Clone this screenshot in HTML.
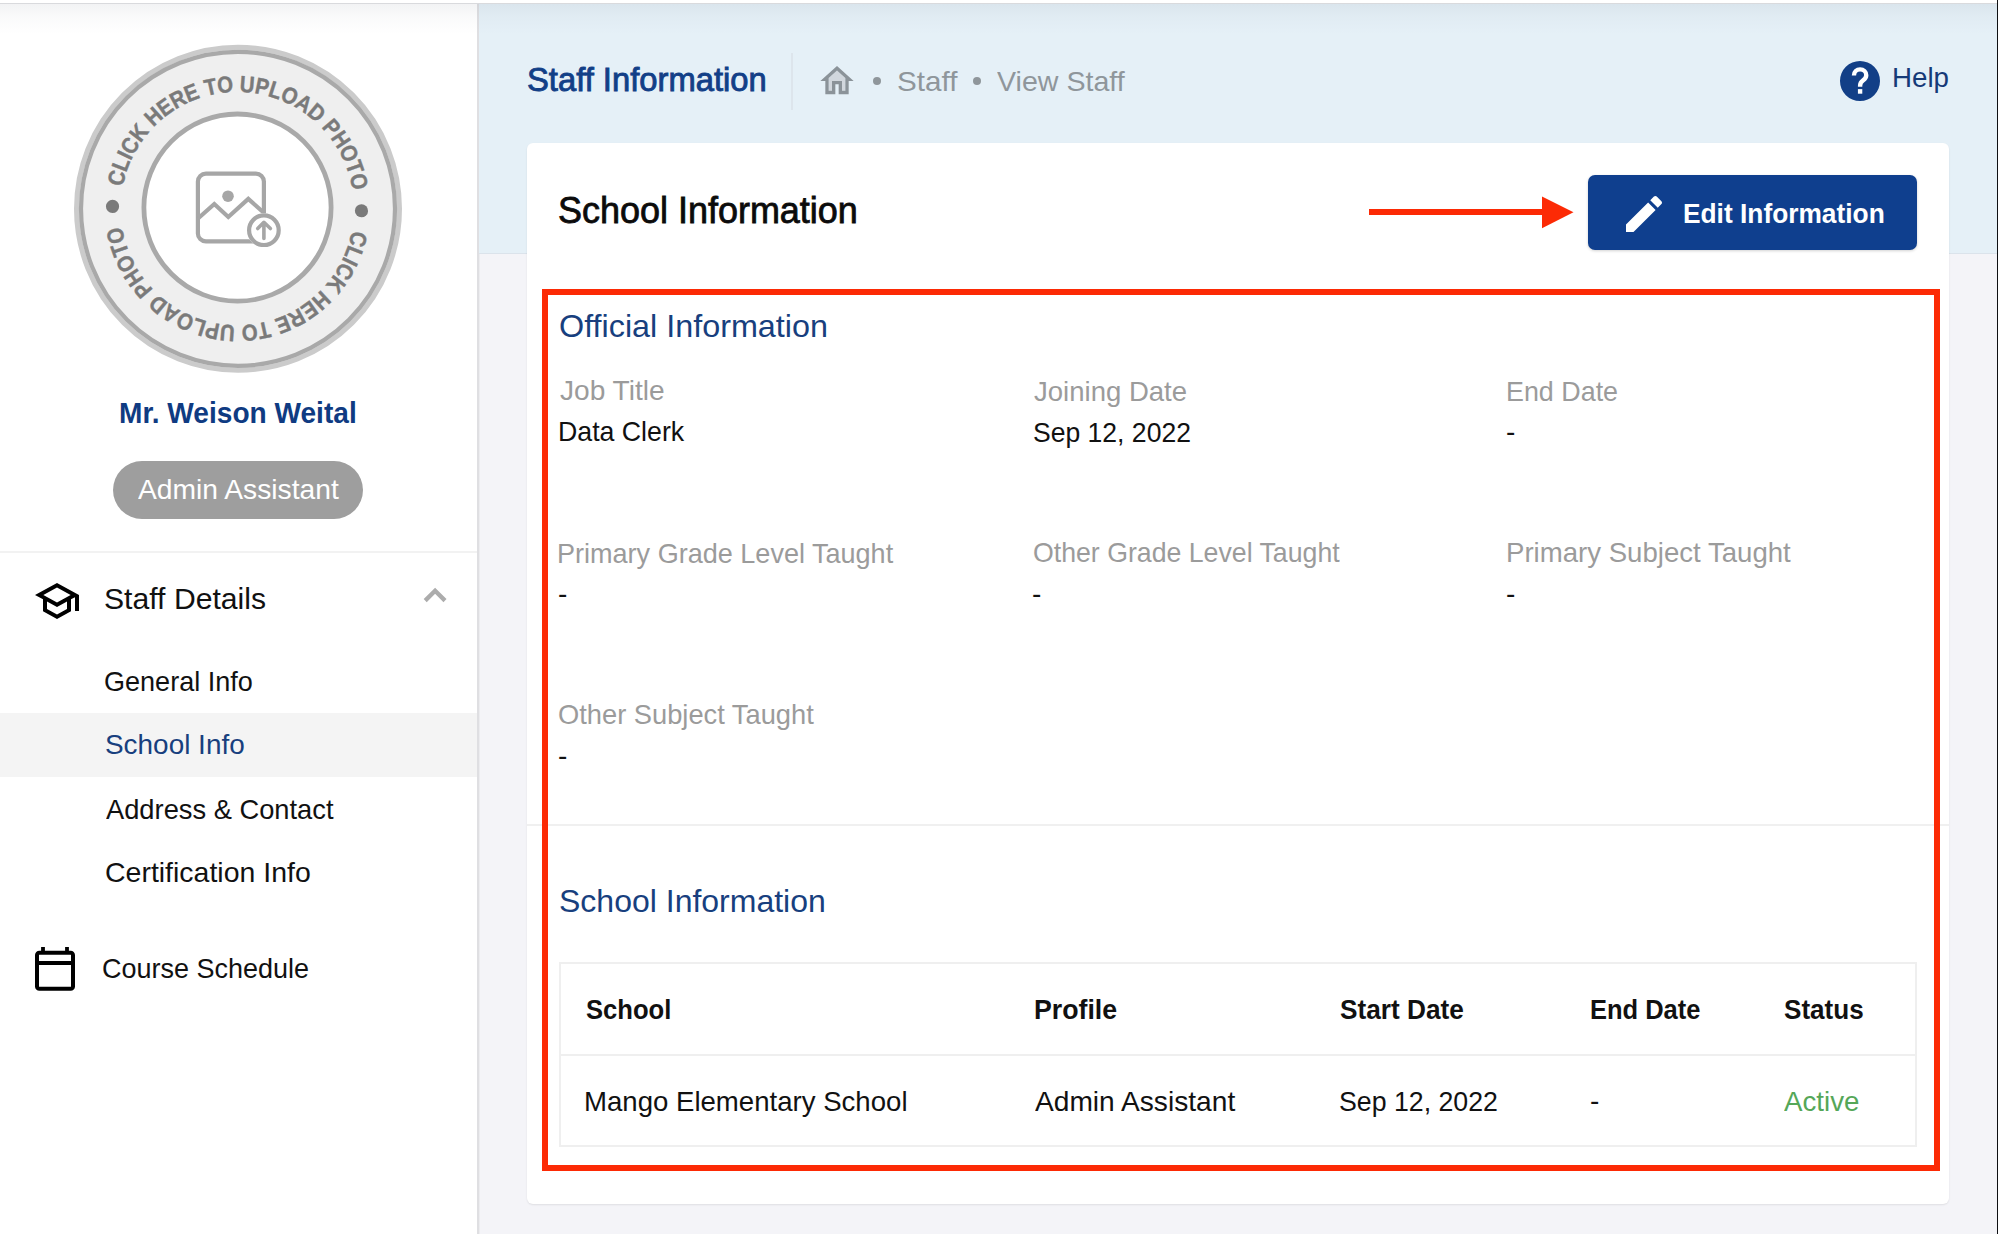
<!DOCTYPE html>
<html><head><meta charset="utf-8">
<style>
*{margin:0;padding:0;box-sizing:border-box}
html,body{width:1998px;height:1234px;overflow:hidden;background:#f4f4f8;font-family:"Liberation Sans",sans-serif}
.a{position:absolute}
.t{position:absolute;white-space:nowrap;line-height:1;transform-origin:0 0}
#side{left:0;top:0;width:477px;height:1234px;background:#fff}
#sideborder{left:477px;top:0;width:3px;height:1234px;background:linear-gradient(90deg,#dfdfe2 0,#dfdfe2 60%,#ececef 60%)}
#hero{left:479px;top:0;width:1519px;height:254px;background:#e5f0f7;border-bottom:1px solid #dbe3eb}
#topbar{left:0;top:0;width:1998px;height:3px;background:#fff}
#topline{left:0;top:3px;width:1998px;height:1px;background:#d9dadd}
#topshadow{left:0;top:4px;width:1998px;height:30px;background:linear-gradient(rgba(80,90,110,.075),rgba(80,90,110,.03) 40%,rgba(80,90,110,0))}
#rightedge{left:1997px;top:0;width:1px;height:1234px;background:#0e0f12}
#card{left:527px;top:143px;width:1422px;height:1061px;background:#fff;border-radius:6px;box-shadow:0 1px 2px rgba(0,0,0,.09)}
#redbox{left:542px;top:289px;width:1398px;height:882px;border:6px solid #fc2a05}
.lbl{font-size:28px;color:#9b9b9b}
.val{font-size:28px;color:#111}
.sub{font-size:32px;color:#183f7e}
.menu{font-size:28px;color:#111}
</style></head><body>
<div class="a" id="side"></div>
<div class="a" id="sideborder"></div>
<div class="a" id="hero"></div>
<div class="a" id="topbar"></div>
<div class="a" id="topline"></div>
<div class="a" id="topshadow"></div>
<div class="a" id="rightedge"></div>

<!-- header -->
<div class="t" id="h_title" style="left:526.8px;top:63.0px;font-size:33px;color:#123f87;-webkit-text-stroke:.9px #123f87;transform:scaleX(0.9924)">Staff Information</div>
<div class="a" style="left:791px;top:53px;width:2px;height:57px;background:#dde5ec"></div>
<svg class="a" style="left:816.6px;top:61px" width="40" height="39.8" viewBox="0 0 24 24" preserveAspectRatio="none"><path d="M7 10.19V18h2v-6h6v6h2v-7.81l-5-4.5z" fill="#d1d7dd"/><path d="M12 3L2 12h3v8h6v-6h2v6h6v-8h3L12 3zm5 15h-2v-6H9v6H7v-7.81l5-4.5 5 4.5V18z" fill="#8b9399"/></svg>
<div class="a" style="left:873px;top:77px;width:8px;height:8px;border-radius:50%;background:#8f969b"></div>
<div class="t" id="h_staff" style="left:896.7px;top:67.8px;font-size:28px;color:#8f969b;transform:scaleX(1.0574)">Staff</div>
<div class="a" style="left:973px;top:77px;width:8px;height:8px;border-radius:50%;background:#8f969b"></div>
<div class="t" id="h_view" style="left:997.4px;top:67.8px;font-size:28px;color:#8f969b;transform:scaleX(1.0208)">View Staff</div>
<svg class="a" style="left:1835px;top:56px" width="50" height="50" viewBox="0 0 24 24"><path fill="#123f87" d="M12 2.4a9.6 9.6 0 1 0 0 19.2 9.6 9.6 0 0 0 0-19.2z"/><path fill="none" stroke="#fff" stroke-width="2.1" d="M9.1 9.3c0-1.7 1.3-2.9 2.95-2.9s2.95 1.2 2.95 2.8c0 1.3-.7 1.9-1.6 2.6-.8.6-1.35 1.2-1.35 2.5v.5"/><path fill="#fff" d="M11 15.9h2.1v2.2H11z"/></svg>
<div class="t" id="h_help" style="left:1892.4px;top:64.4px;font-size:28px;color:#163a78;transform:scaleX(0.9894)">Help</div>

<div class="a" id="card"></div>
<div class="t" id="c_title" style="left:558.4px;top:192.6px;font-size:36px;color:#0b0b0b;-webkit-text-stroke:.8px #0b0b0b;transform:scaleX(0.9988)">School Information</div>

<!-- button -->
<div class="a" id="btn" style="left:1588px;top:175px;width:329px;height:75px;background:#0f3f8e;border-radius:7px;box-shadow:0 1px 3px rgba(0,0,0,.18)"></div>
<svg class="a" style="left:1620px;top:190px" width="48" height="48" viewBox="0 0 24 24"><path fill="#fff" d="M3 17.25V21h3.75L17.81 9.94l-3.75-3.75L3 17.25zM20.71 7.04c.39-.39.39-1.02 0-1.41l-2.34-2.34c-.39-.39-1.02-.39-1.41 0l-1.83 1.83 3.75 3.75 1.83-1.83z"/></svg>
<div class="t" id="b_text" style="left:1683.3px;top:200.2px;font-size:28px;color:#fff;font-weight:700;transform:scaleX(0.9397)">Edit Information</div>

<!-- arrow -->
<div class="a" style="left:1369px;top:209px;width:176px;height:6px;background:#fc2a05"></div>
<svg class="a" style="left:1540px;top:196px" width="35" height="33"><path d="M2 0.5 L33.5 16.3 L2 32.2Z" fill="#fc2a05"/></svg>

<div class="a" style="left:527px;top:824px;width:1422px;height:2px;background:#f0f0f0"></div>
<div class="a" id="redbox"></div>

<div class="t sub" id="s_off" style="left:559.0px;top:309.8px;transform:scaleX(1.0104)">Official Information</div>

<div class="t lbl" id="l1" style="left:560.0px;top:377.2px;transform:scaleX(1.0037)">Job Title</div>
<div class="t val" id="v1" style="left:558.1px;top:418.0px;transform:scaleX(0.9538)">Data Clerk</div>
<div class="t lbl" id="l2" style="left:1033.8px;top:377.8px;transform:scaleX(0.9834)">Joining Date</div>
<div class="t val" id="v2" style="left:1032.9px;top:418.6px;transform:scaleX(0.9479)">Sep 12, 2022</div>
<div class="t lbl" id="l3" style="left:1505.7px;top:377.8px;transform:scaleX(0.9597)">End Date</div>
<div class="t val" id="v3" style="left:1506px;top:418px">-</div>

<div class="t lbl" id="l4" style="left:557.3px;top:539.8px;transform:scaleX(0.9657)">Primary Grade Level Taught</div>
<div class="t val" id="v4" style="left:558px;top:580px">-</div>
<div class="t lbl" id="l5" style="left:1033.0px;top:539.2px;transform:scaleX(0.9533)">Other Grade Level Taught</div>
<div class="t val" id="v5" style="left:1032px;top:580px">-</div>
<div class="t lbl" id="l6" style="left:1505.6px;top:539.4px;transform:scaleX(0.9854)">Primary Subject Taught</div>
<div class="t val" id="v6" style="left:1506px;top:580px">-</div>

<div class="t lbl" id="l7" style="left:558.2px;top:701.4px;transform:scaleX(0.9742)">Other Subject Taught</div>
<div class="t val" id="v7" style="left:558px;top:742px">-</div>


<div class="t sub" id="s_sch" style="left:559.0px;top:885.2px;transform:scaleX(1.0000)">School Information</div>

<div class="a" id="table" style="left:559px;top:962px;width:1358px;height:185px;border:2px solid #efefef"></div>
<div class="a" style="left:561px;top:1054px;width:1354px;height:2px;background:#efefef"></div>
<div class="t val" id="th1" style="left:585.9px;top:996.2px;font-weight:700;transform:scaleX(0.9145)">School</div>
<div class="t val" id="th2" style="left:1034.1px;top:995.8px;font-weight:700;transform:scaleX(0.9538)">Profile</div>
<div class="t val" id="th3" style="left:1339.9px;top:995.8px;font-weight:700;transform:scaleX(0.9361)">Start Date</div>
<div class="t val" id="th4" style="left:1590.1px;top:996.4px;font-weight:700;transform:scaleX(0.9100)">End Date</div>
<div class="t val" id="th5" style="left:1783.7px;top:996.4px;font-weight:700;transform:scaleX(0.9312)">Status</div>
<div class="t val" id="td1" style="left:584.4px;top:1088.2px;transform:scaleX(0.9851)">Mango Elementary School</div>
<div class="t val" id="td2" style="left:1035.0px;top:1087.6px;transform:scaleX(1.0050)">Admin Assistant</div>
<div class="t val" id="td3" style="left:1338.8px;top:1087.6px;transform:scaleX(0.9540)">Sep 12, 2022</div>
<div class="t val" id="td4" style="left:1590px;top:1087px">-</div>
<div class="t val" id="td5" style="left:1783.6px;top:1088.2px;color:#55a758;transform:scaleX(0.9893)">Active</div>

<!-- sidebar -->
<svg class="a" id="photo" style="left:70px;top:40px" width="336" height="336" viewBox="-168 -168 336 336">
  <circle cy="0.8" r="161.5" fill="#efefef" stroke="#cbcbcb" stroke-width="5"/>
  <circle cy="0.8" r="157" fill="none" stroke="#a9a9a9" stroke-width="4.2"/>
  <circle cx="-0.5" cy="-0.4" r="93.6" fill="#fff" stroke="#a9a9a9" stroke-width="4.8"/>
  <defs>
    <path id="arcTop" d="M -116.7 0 A 116.7 116.7 0 0 1 116.7 0"/>
    <path id="arcBot" d="M 116.7 0 A 116.7 116.7 0 0 1 -116.7 0"/>
  </defs>
  <g transform="translate(-0.7 0.6) rotate(1)" fill="#7a7a7a" stroke="#7a7a7a" stroke-width="0.45" font-family="Liberation Sans" font-weight="700" font-size="23">
    <text><textPath href="#arcTop" startOffset="50%" text-anchor="middle" textLength="327" lengthAdjust="spacingAndGlyphs">CLICK HERE TO UPLOAD PHOTO</textPath></text>
    <text><textPath href="#arcBot" startOffset="50%" text-anchor="middle" textLength="327" lengthAdjust="spacingAndGlyphs">CLICK HERE TO UPLOAD PHOTO</textPath></text>
    <circle cx="-124.8" cy="0" r="6.6" stroke="none"/>
    <circle cx="124.2" cy="0" r="6.6" stroke="none"/>
  </g>
</svg>
<svg class="a" style="left:185px;top:160px" width="110" height="95" viewBox="185 160 110 95">
  <rect x="197.9" y="173.6" width="66" height="67.8" rx="8" fill="none" stroke="#a6a6a6" stroke-width="4.2"/>
  <circle cx="228" cy="196.2" r="5.8" fill="#a6a6a6"/>
  <polyline points="198,218.5 214.3,204 228.3,217 248.3,198.9 263,212" fill="none" stroke="#a6a6a6" stroke-width="4.2" stroke-linejoin="miter"/>
  <circle cx="263.9" cy="230.2" r="17" fill="#fff"/>
  <circle cx="263.9" cy="230.2" r="14.8" fill="#fff" stroke="#a6a6a6" stroke-width="4.2"/>
  <path d="M263.9 238.5V223M257.7 228.5 263.9 222.3 270.4 228.5" fill="none" stroke="#a6a6a6" stroke-width="3.6" stroke-linecap="round" stroke-linejoin="round"/>
</svg>

<div class="t" id="name" style="left:119.1px;top:397.8px;font-size:30px;color:#0f3b82;font-weight:700;transform:scaleX(0.9360)">Mr. Weison Weital</div>
<div class="a" style="left:113px;top:461px;width:250px;height:58px;border-radius:29px;background:#9e9e9e"></div>
<div class="t" id="chip" style="left:137.8px;top:476.4px;font-size:28px;color:#fff;transform:scaleX(1.0081)">Admin Assistant</div>

<div class="a" style="left:0;top:551px;width:477px;height:2px;background:#f2f2f2"></div>

<svg class="a" style="left:33px;top:577px" width="48" height="48" viewBox="0 0 24 24"><path d="M12 3 1 9l4 2.18v6L12 21l7-3.82v-6l2-1.09V17h2V9L12 3zm6.82 6L12 12.72 5.18 9 12 5.28 18.82 9zM17 15.99l-5 2.73-5-2.73v-3.72L12 15l5-2.73v3.72z" fill="#000"/></svg>
<div class="t menu" id="m_sd" style="left:104.2px;top:585.0px;font-size:29px;transform:scaleX(1.0403)">Staff Details</div>
<svg class="a" style="left:410px;top:575px" width="50" height="40" viewBox="410 575 50 40"><path d="M425.2 600.6 435.1 590.8 445 600.6" fill="none" stroke="#acacac" stroke-width="4.3" stroke-linejoin="miter"/></svg>

<div class="t menu" id="m1" style="left:104.2px;top:667.8px;transform:scaleX(0.9659)">General Info</div>
<div class="a" style="left:0;top:713px;width:477px;height:64px;background:#f4f4f4"></div>
<div class="t menu" id="m2" style="left:104.6px;top:731.2px;color:#183f7e;transform:scaleX(0.9971)">School Info</div>
<div class="t menu" id="m3" style="left:105.6px;top:795.6px;transform:scaleX(0.9744)">Address &amp; Contact</div>
<div class="t menu" id="m4" style="left:104.6px;top:858.8px;transform:scaleX(1.0169)">Certification Info</div>

<svg class="a" style="left:0;top:900px" width="100" height="100" viewBox="0 900 100 100"><rect x="37" y="952.8" width="36" height="36" rx="2.3" fill="none" stroke="#000" stroke-width="4"/><rect x="37" y="961" width="36" height="4" fill="#000"/><rect x="41.1" y="947" width="3.8" height="6" fill="#000"/><rect x="65.1" y="947" width="3.8" height="6" fill="#000"/></svg>
<div class="t menu" id="m_cs" style="left:102.4px;top:955.4px;transform:scaleX(0.9642)">Course Schedule</div>

</body></html>
